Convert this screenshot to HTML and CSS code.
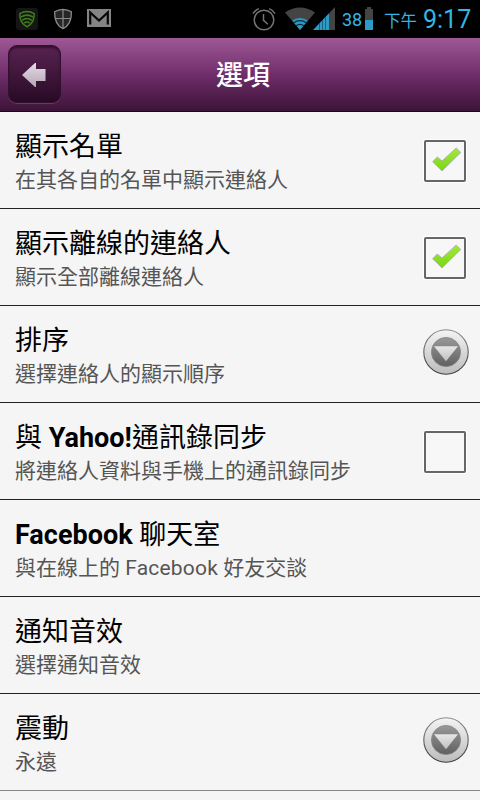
FILE: index.html
```html
<!DOCTYPE html>
<html lang="zh-Hant">
<head>
    <meta charset="UTF-8">
    <meta name="viewport" content="width=device-width, initial-scale=1.0">
    <title>選項</title>
    <link rel="stylesheet" href="styles.css">
</head>
<body>
    <!-- shared icons -->
    <svg class="defs" width="0" height="0">
        <defs>
            <linearGradient id="arrow" x1="0" y1="0" x2="0" y2="1">
                <stop offset="0" stop-color="#e6dbe6"/>
                <stop offset="1" stop-color="#b5a6b6"/>
            </linearGradient>
            <linearGradient id="green" x1="0" y1="0" x2="0" y2="1">
                <stop offset="0" stop-color="#a3e83a"/>
                <stop offset="1" stop-color="#79d812"/>
            </linearGradient>
            <linearGradient id="ring" x1="0" y1="0" x2="0" y2="1">
                <stop offset="0" stop-color="#f4f4f4"/>
                <stop offset="1" stop-color="#bcbcbc"/>
            </linearGradient>
            <linearGradient id="edge" x1="0" y1="0" x2="0" y2="1">
                <stop offset="0" stop-color="#8c8c8c"/>
                <stop offset="1" stop-color="#3c3c3c"/>
            </linearGradient>
            <linearGradient id="disc" x1="0" y1="0" x2="0" y2="1">
                <stop offset="0" stop-color="#999"/>
                <stop offset="1" stop-color="#606060"/>
            </linearGradient>
            <linearGradient id="tri" x1="0" y1="0" x2="0" y2="1">
                <stop offset="0" stop-color="#e6e6e6"/>
                <stop offset="1" stop-color="#c0c0c0"/>
            </linearGradient>
        </defs>
        <symbol id="check" viewBox="0 0 31 26">
            <path d="M1.600 15.700 6.300 11 11 15 25.200 2 29.800 6.500 11 25Z" fill="url(#green)" stroke="#b4b2bb" stroke-width="1" stroke-linejoin="round"/>
        </symbol>
        <symbol id="drop" viewBox="0 0 46 46">
            <circle cx="23" cy="23" r="22.200" fill="url(#ring)" stroke="url(#edge)" stroke-width="1.100"/>
            <circle cx="23" cy="23" r="14.600" fill="url(#disc)" stroke="#858585" stroke-width=".8"/>
            <path d="M11 17.200h24L23 32.300Z" fill="url(#tri)"/>
        </symbol>
    </svg>

    <div class="status-bar">
        <div class="status-icons">
            <svg class="lookout" width="22" height="22" viewBox="0 0 22 22">
                <rect width="22" height="22" rx="3" fill="#151515"/>
                <path d="M11 3.600C8.500 3.700 6 4.500 3.800 5.600 3.600 12 6 16.500 11 18.700 16 16.500 18.400 12 18.200 5.600 16 4.500 13.500 3.700 11 3.600Z" fill="none" stroke="#3f7d1e" stroke-width="1.500"/>
                <path d="M4.800 9.200Q11 5 17.200 9.200M6.200 12.400Q11 8.600 15.800 12.400M8.200 15.200Q11 12.800 13.800 15.200" fill="none" stroke="#3f7d1e" stroke-width="1.600"/>
            </svg>
            <svg class="shield" width="20" height="22" viewBox="0 0 20 22">
                <path d="M10 1.300C7.500 1.400 4.200 2.200 1.600 3.700 1.400 12 3.500 17.500 10 20.700 16.500 17.500 18.600 12 18.400 3.700 15.800 2.200 12.500 1.400 10 1.300Z" fill="#262626" stroke="#8a8a8a" stroke-width="1.300"/>
                <path d="M10 2v18M2 10.500h16" stroke="#8a8a8a" stroke-width="1.200"/>
            </svg>
            <svg class="mail" width="24" height="18" viewBox="0 0 24 18">
                <rect width="24" height="18" fill="#858585"/>
                <path d="M3.200 15.500V3.500L12 11.500 20.800 3.500V15.500" fill="none" stroke="#080808" stroke-width="2.200"/>
            </svg>
        </div>
        <div class="status-info">
            <svg class="alarm" width="24" height="24" viewBox="0 0 24 24" fill="none" stroke="#747474" stroke-width="1.500">
                <circle cx="12" cy="13" r="9.800"/>
                <path d="M11.500 7v6.300l4.300 4M1 6.600C2.500 4.200 4.500 2.500 6.800 1.600M23 6.600C21.500 4.200 19.500 2.500 17.200 1.600"/>
            </svg>
            <svg class="wifi" width="30" height="23" viewBox="0 0 30 23">
                <path d="M0 5.500Q15-4.500 30 5.500L15 23Z" fill="#444"/>
                <path d="M7.200 13.500Q15 8.500 22.800 13.500L15 23Z" fill="#2e9bc6"/>
                <path d="M8.500 15.700Q15 11.500 21.500 15.700M11 18.800Q15 16 19 18.800" fill="none" stroke="#0b2a36" stroke-width="1.100"/>
            </svg>
            <svg class="signal" width="22" height="23" viewBox="0 0 22 23">
                <path d="M22 0V23H16V6.300Z" fill="#444"/>
                <path d="M0 23 16 6.300V23Z" fill="#2e9bc6"/>
                <path d="M6.500 16v7M9.500 13v10M12.500 10v13" stroke="#1b637f" stroke-width="1"/>
            </svg>
            <span class="percent">38</span>
            <svg class="battery" width="8" height="23" viewBox="0 0 8 23">
                <path d="M2 0h4v2h2v11H0V2h2Z" fill="#444"/>
                <path d="M0 13h8v10H0Z" fill="#2e9bc6"/>
            </svg>
            <span class="ampm">下午</span>
            <span class="clock">9:17</span>
        </div>
    </div>

    <div class="header">
        <button class="back" aria-label="返回">
            <svg width="24" height="24" viewBox="0 0 24 24">
                <path d="M0 12 13 0h1v6h9.500v12H14v6h-1Z" fill="url(#arrow)"/>
            </svg>
        </button>
        <h1>選項</h1>
    </div>

    <div class="options">
        <div class="option">
            <div class="option-text">
                <h2>顯示名單</h2>
                <p>在其各自的名單中顯示連絡人</p>
            </div>
            <div class="checkbox"><svg width="31" height="26"><use href="#check"/></svg></div>
        </div>
        <div class="option">
            <div class="option-text">
                <h2>顯示離線的連絡人</h2>
                <p>顯示全部離線連絡人</p>
            </div>
            <div class="checkbox"><svg width="31" height="26"><use href="#check"/></svg></div>
        </div>
        <div class="option">
            <div class="option-text">
                <h2>排序</h2>
                <p>選擇連絡人的顯示順序</p>
            </div>
            <svg class="dropdown" width="46" height="46"><use href="#drop"/></svg>
        </div>
        <div class="option">
            <div class="option-text">
                <h2>與 <b>Yahoo!</b>通訊錄同步</h2>
                <p>將連絡人資料與手機上的通訊錄同步</p>
            </div>
            <div class="checkbox"></div>
        </div>
        <div class="option">
            <div class="option-text">
                <h2><b>Facebook</b> 聊天室</h2>
                <p>與在線上的 <span class="latin">Facebook</span> 好友交談</p>
            </div>
        </div>
        <div class="option">
            <div class="option-text">
                <h2>通知音效</h2>
                <p>選擇通知音效</p>
            </div>
        </div>
        <div class="option last">
            <div class="option-text">
                <h2>震動</h2>
                <p>永遠</p>
            </div>
            <svg class="dropdown" width="46" height="46"><use href="#drop"/></svg>
        </div>
    </div>
</body>
</html>
```

FILE: styles.css
```css
* {
    margin: 0;
    padding: 0;
    box-sizing: border-box;
}

body {
    width: 480px;
    height: 800px;
    overflow: hidden;
    background: #f5f5f5;
    font-family: Roboto, "Noto Sans CJK TC", sans-serif;
}

.defs {
    display: block;
}

.status-bar {
    display: flex;
    justify-content: space-between;
    height: 38px;
    padding: 0 10px 0 16px;
    background: #000;
    color: #33b5e5;
}

.status-icons,
.status-info {
    display: flex;
    align-items: flex-start;
}

.lookout {
    margin-top: 8px;
}

.shield {
    margin: 8px 0 0 15px;
}

.mail {
    margin: 9px 0 0 14px;
}

.alarm {
    margin: 7px 9px 0 0;
}

.wifi {
    margin-top: 7px;
}

.signal {
    margin: 7px 7px 0 -2px;
}

.percent {
    width: 20px;
    margin-right: 3px;
    font-size: 18px;
    line-height: 40px;
}

.battery {
    margin: 7px 11px 0 0;
}

.ampm {
    width: 33px;
    margin-right: 6px;
    font-size: 16.5px;
    line-height: 43px;
}

.clock {
    width: 47px;
    font-size: 25px;
    line-height: 39px;
}

.header {
    display: grid;
    grid-template-columns: 53px 1fr 47px;
    align-items: start;
    height: 74px;
    padding: 7px 8px 0;
    background: linear-gradient(#9f5896 0%, #6f2e6b 50%, #552050 75%, #3d1539 100%);
    border-bottom: 1px solid #1e081c;
}

.back {
    display: flex;
    align-items: center;
    justify-content: center;
    width: 53px;
    height: 58px;
    padding: 2px 1px 0 0;
    border: 1px solid #34102f;
    border-radius: 9px;
    background: linear-gradient(#572252, #40173b 50%, #280a24);
    box-shadow: inset 0 2px 2px #35102f, 0 1px 0 #693866;
}

.header h1 {
    color: #fff;
    font-size: 27px;
    font-weight: 500;
    line-height: 62px;
    text-align: center;
}

.option {
    display: flex;
    justify-content: space-between;
    height: 97px;
    padding: 15px 11px 0 15px;
    border-bottom: 1px solid #222;
}

.option.last {
    border-bottom-color: #888;
}

.option-text {
    padding-top: 2px;
}

.option h2 {
    color: #000;
    font-size: 27px;
    font-weight: 400;
    line-height: 36px;
}

.option p {
    color: #555;
    font-size: 21px;
    line-height: 30px;
}

.latin {
    letter-spacing: 0.2px;
}

.checkbox {
    display: flex;
    justify-content: center;
    width: 42px;
    height: 42px;
    margin: 13px 3px 0 0;
    padding: 4px 0 0 3px;
    border: 2px solid #666;
    border-radius: 2px;
    background: #f7f7f7;
    box-shadow: 0 0 0 1px #fff;
}

.dropdown {
    margin-top: 8px;
}
```
